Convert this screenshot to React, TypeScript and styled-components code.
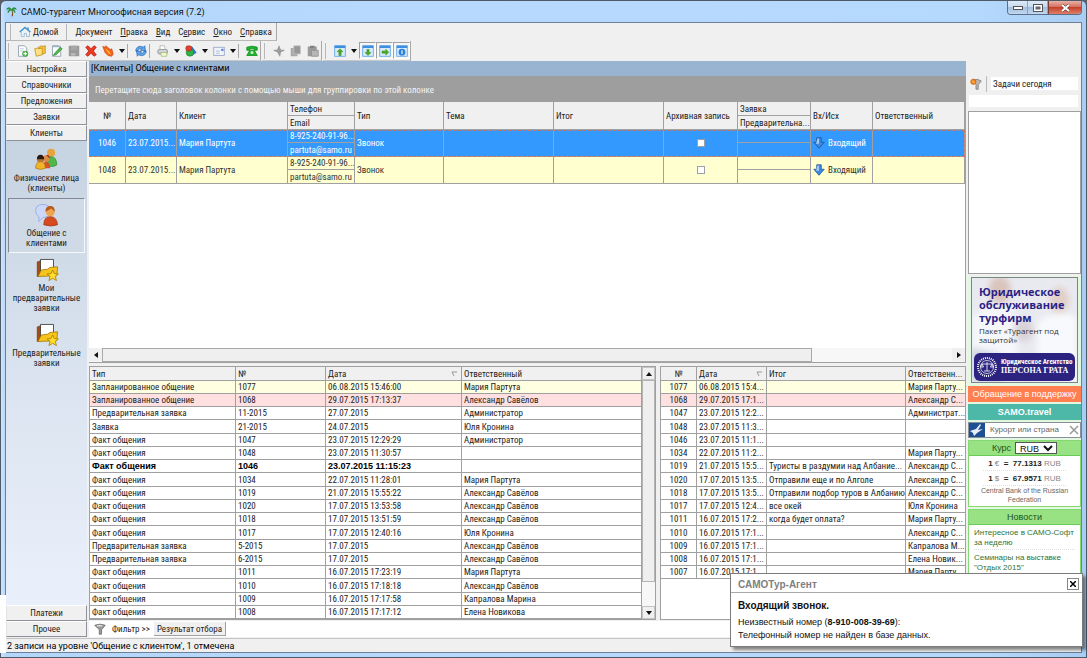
import React from "react";
import styled, { createGlobalStyle, css } from "styled-components";

const UI = `"Roboto Condensed", "DejaVu Sans Condensed", "Liberation Sans", sans-serif`;
const SANS = `"Liberation Sans", Arial, sans-serif`;
const CHROME = `Roboto, "Noto Sans", sans-serif`;
const HUMAN = `"Open Sans", "Noto Sans", sans-serif`;

const Global = createGlobalStyle`
  * { box-sizing: border-box; }
  body { margin: 0; background: #5c6066; font-family: ${UI}; font-size: 9px; line-height: 12px; color: #222; }
  button, input, select { font: inherit; color: inherit; margin: 0; padding: 0; border: 0; background: none; border-radius: 0; }
  a { color: inherit; text-decoration: none; }
  svg { display: block; flex: none; }
`;

/* ---------- window frame ---------- */

const Window = styled.div`
  position: relative;
  height: 100vh;
  min-height: 640px;
  display: flex;
  flex-direction: column;
  border: 1px solid #4f5a68;
  border-radius: 6px 6px 0 0;
  padding: 0 4px 4px;
  background: linear-gradient(90deg, #cfe4fa 0, #b3d6fb 5px, #b7d9fd 40%, #b5d8fd 90%, #a9cdf2 100%);
`;

const FramePatch = styled.div`
  position: absolute;
  left: -1px;
  bottom: 4px;
  width: 6px;
  height: 58px;
  background: #fff;
`;

const TitleBar = styled.header`
  height: 21px;
  flex: none;
  display: flex;
  align-items: center;
  gap: 4px;
  padding-left: 1px;
  font: 9px/20px ${CHROME};
  color: #111;
  h1 { flex: 1; margin: 0; font: inherit; }
`;

const WinButtons = styled.div`
  display: flex;
  align-self: flex-start;
  height: 14px;
  border: 1px solid #5b6f8a;
  border-top: 0;
  border-radius: 0 0 4px 4px;
  overflow: hidden;
`;

const WinButton = styled.button<{ $close?: boolean }>`
  width: ${(p) => (p.$close ? 33 : 20)}px;
  display: grid;
  place-items: center;
  border-left: ${(p) => (p.$close ? "1px solid #7c3a35" : "0")};
  border-right: ${(p) => (p.$close ? "0" : "1px solid #8ea4bf")};
  background: ${(p) =>
    p.$close
      ? "linear-gradient(#e6b3a8, #d8705c 45%, #c4422c 50%, #dd8068)"
      : "linear-gradient(#dde9f7, #c8dbf1 45%, #a5bfdc 50%, #c0d8f0)"};
`;

const Client = styled.div`
  flex: 1;
  min-height: 0;
  display: flex;
  flex-direction: column;
  border: 1px solid #6d8097;
  background: #f0f0f0;
`;

/* ---------- menu and tool bars ---------- */

const MenuBar = styled.nav`
  display: flex;
  align-self: flex-start;
  align-items: center;
  height: 18px;
  padding: 0 4px 0 4px;
  border-right: 1px solid #a8a8a8;
  border-bottom: 1px solid #b8b8b8;
  gap: 8px;
  a { display: flex; align-items: center; gap: 2px; }
  u { text-underline-offset: 1px; }
`;

const Grip = styled.span`
  width: 1px;
  height: 16px;
  background: #b8b8b8;
`;

const ToolRow = styled.div`
  display: flex;
  height: 20px;
  flex: none;
`;

const ToolBar = styled.div`
  display: flex;
  align-items: center;
  padding-left: 2px;
  margin-right: 1px;
  border-right: 1px solid #a8a8a8;
  border-bottom: 1px solid #c8c8c8;
  > ${Grip} { margin-right: 5px; }
`;

const ToolButton = styled.button<{ $on?: boolean }>`
  width: 17px;
  height: 17px;
  display: grid;
  place-items: center;
  ${(p) => p.$on && css`border: 1px solid #a0a0a0; border-right-color: #fff; border-bottom-color: #fff; background: #f6f6f6;`}
`;

const DropButton = styled.button`
  width: 11px;
  height: 17px;
  display: grid;
  place-items: center;
`;

const Sep = styled.span<{ $blank?: boolean }>`
  width: 5px;
  height: 14px;
  border-left: 1px solid ${(p) => (p.$blank ? "transparent" : "#a8a8a8")};
`;

/* ---------- body ---------- */

const Body = styled.div`
  flex: 1;
  min-height: 0;
  display: grid;
  grid-template-columns: 81px minmax(0, 1fr) 113px;
  column-gap: 2px;
  padding: 0 0 1px 0;
`;

const SideNav = styled.aside`
  display: flex;
  flex-direction: column;
  min-height: 0;
`;

const SideButton = styled.button`
  height: 16px;
  flex: none;
  border: 1px solid #8d9299;
  border-top-color: #fff;
  border-left-color: #e4e4e4;
  background: #f0f0f0;
  text-align: center;
`;

const SidePanel = styled.div`
  flex: 1;
  display: flex;
  flex-direction: column;
  padding: 2px 2px 0;
  background: linear-gradient(#c6d3e0, #d8e2ee 45%, #eaf0fb);
`;

const SideItem = styled.a<{ $active?: boolean }>`
  display: flex;
  flex-direction: column;
  align-items: center;
  padding: 3px 0 4px;
  line-height: 10px;
  text-align: center;
  white-space: pre-line;
  border: 1px solid transparent;
  ${(p) => p.$active && css`border-color: #7f8894 #f4f8fc #f4f8fc #7f8894; background: #d0dae6;`}
`;

const Main = styled.main`
  display: flex;
  flex-direction: column;
  min-width: 0;
  min-height: 0;
`;

const Caption = styled.h2`
  margin: 0;
  height: 15px;
  flex: none;
  padding: 0 2px;
  background: #99b4d1;
  font: 9px/15px ${CHROME};
  color: #000;
`;

const GroupHint = styled.div`
  height: 26px;
  flex: none;
  padding: 0 6px;
  background: #9e9e9e;
  color: #f4f4f4;
  line-height: 28px;
`;

const UpperPane = styled.section`
  flex: 1;
  min-height: 0;
  display: flex;
  flex-direction: column;
  justify-content: space-between;
  background: #fff;
  border-right: 1px solid #a0a0a0;
  border-bottom: 1px solid #a0a0a0;
`;

const Grid = styled.table`
  width: 100%;
  table-layout: fixed;
  border-collapse: separate;
  border-spacing: 0;
  th, td {
    padding: 0 2px;
    overflow: hidden;
    white-space: nowrap;
    text-align: left;
    font-weight: inherit;
    border-right: 1px solid #a0a0a0;
    border-bottom: 1px solid #a0a0a0;
  }
  th { background: #f0f0f0; }
`;

const CallGrid = styled(Grid)`
  tr { height: 13px; }
  thead tr, tr:nth-child(2) { height: 14px; }
  th, td { line-height: 12px; }
  th:first-child[rowspan], td[data-center] { text-align: center; }
`;

const CallBody = styled.tbody<{ $selected?: boolean }>`
  background: ${(p) => (p.$selected ? "#3399ff" : "#ffffcf")};
  color: ${(p) => (p.$selected ? "#fff" : "#333")};
  ${(p) => p.$selected && css`outline: 1px dashed #c87860; outline-offset: -1px;`}
  input { display: block; appearance: none; width: 8px; height: 8px; margin: 0 auto; background: #fff; border: 1px solid #9aa0a8; }
  label { display: flex; align-items: center; gap: 3px; }
`;

const HScroll = styled.div`
  display: flex;
  height: 14px;
  flex: none;
  background: #f7f7f7;
  align-items: stretch;
`;

const ScrollButton = styled.button`
  width: 13px;
  height: 13px;
  flex: none;
  display: grid;
  place-items: center;
  background: #f0f0f0;
`;

const HTrack = styled.div`
  flex: 1;
  display: flex;
  &::after { content: ""; flex: 14; }
`;

const HThumb = styled.div`
  flex: 71;
  border: 1px solid #a9a9a9;
  background: #efefef;
`;

const LowerPane = styled.section`
  display: grid;
  grid-template-columns: minmax(0, 1fr) 306px;
  column-gap: 4px;
  height: 254px;
  flex: none;
  margin-top: 3px;
`;

const ListBox = styled.div`
  display: flex;
  min-width: 0;
  overflow: hidden;
  background: #fff;
  border-top: 1px solid #a0a0a0;
  border-left: 1px solid #a0a0a0;
  border-bottom: 1px solid #a0a0a0;
`;

const ListScroll = styled.div`
  flex: 1;
  min-width: 0;
  overflow: hidden;
`;

const VScroll = styled.div`
  width: 14px;
  flex: none;
  display: flex;
  flex-direction: column;
  background: #f7f7f7;
  border-right: 1px solid #a0a0a0;
  ${ScrollButton} { border: 1px solid #c4c4c4; }
`;

const VThumb = styled.div`
  flex: 1;
  margin-bottom: 24px;
  border: 1px solid #b4b4b4;
  background: #efefef;
`;

const ListGrid = styled(Grid)<{ $centerFirst?: boolean }>`
  thead tr { height: 14px; }
  tbody tr { height: 13px; }
  tbody tr:nth-child(4n) { height: 14px; }
  th, td { line-height: 12px; }
  ${(p) => p.$centerFirst && css`th:first-child, td:first-child { text-align: center; }`}
`;

const ListRow = styled.tr<{ $tone?: string }>`
  background: ${(p) => (p.$tone === "plan" ? "#ffffe1" : p.$tone === "late" ? "#ffe0e0" : "#fff")};
  ${(p) => p.$tone === "now" && css`font: bold 9px ${SANS}; color: #000;`}
`;

const SortHead = styled.span`
  display: flex;
  justify-content: space-between;
  align-items: center;
  padding-right: 1px;
`;

const FilterBar = styled.div`
  display: flex;
  align-items: center;
  height: 16px;
  flex: none;
  margin-top: 1px;
  padding-left: 5px;
  background: #fff;
  button { display: flex; align-items: center; gap: 6px; height: 14px; }
`;

const ResultTab = styled.button`
  margin-left: 4px;
  padding: 0 3px;
  background: #f0f0f0;
  border-right: 1px solid #a0a0a0;
  border-bottom: 1px solid #a0a0a0;
`;

const StatusBar = styled.footer`
  height: 14px;
  flex: none;
  padding-left: 1px;
  border-top: 1px solid #c4c4c4;
  font: 9px/14px ${CHROME};
  color: #000;
`;

/* ---------- right column ---------- */

const RightCol = styled.aside`
  display: flex;
  flex-direction: column;
  min-height: 0;
  padding-top: 16px;
`;

const TaskRow = styled.div`
  display: flex;
  align-items: center;
  height: 13px;
  flex: none;
  gap: 4px;
  padding: 0 3px 0 2px;
  input { flex: 1; min-width: 0; height: 13px; background: #fff; padding-left: 2px; }
`;

const TaskLine = styled.input`
  && { height: 12px; margin: 5px 3px 4px 1px; background: #fff; flex: none; }
`;

const TaskList = styled.div`
  height: 163px;
  flex: none;
  border: 1px solid #a0a0a0;
  background: #fff;
`;

const Widgets = styled.div`
  flex: 1;
  min-height: 0;
  overflow: hidden;
  display: flex;
  flex-direction: column;
  margin-top: 2px;
  gap: 2px;
  background: #e2f8e0;
  font-family: ${SANS};
`;

const Banner = styled.a`
  position: relative;
  display: flex;
  flex-direction: column;
  height: 106px;
  flex: none;
  margin: 1px 3px 1px;
  border: 1px solid #80838c;
  overflow: hidden;
  background: #e9eaf0;
  strong { position: relative; padding: 7px 0 0 7px; font: bold 11px/13px ${HUMAN}; color: #2b1f86; white-space: pre-line; }
  span { position: relative; padding: 2px 0 0 7px; font: 8px/9px ${HUMAN}; color: #333; white-space: pre-line; }
`;

const BannerArt = styled.svg`
  position: absolute;
  inset: 0;
  width: 100%;
  height: 100%;
`;

const Agency = styled.div`
  position: relative;
  display: flex;
  align-items: center;
  gap: 3px;
  height: 28px;
  margin: auto 2px 1px;
  padding-left: 2px;
  border-radius: 6px;
  background: #2c2380;
  color: #fff;
  font: bold 8px/10px "Liberation Serif", serif;
  white-space: nowrap;
  small { display: block; font: bold 7px/8px ${UI}; }
`;

const LinkBar = styled.a<{ $color: string }>`
  height: 16px;
  flex: none;
  background: ${(p) => p.$color};
  color: #fff;
  font-size: 9px;
  line-height: 16px;
  text-align: center;
  white-space: nowrap;
`;

const Search = styled.label`
  display: flex;
  align-items: center;
  height: 16px;
  flex: none;
  border: 1px solid #8a9099;
  background: #fff;
  color: #777;
  input { flex: 1; min-width: 0; padding-left: 5px; font-size: 8px; }
  input::placeholder { color: #666; opacity: 1; }
`;

const Card = styled.section<{ $fill?: boolean }>`
  flex: ${(p) => (p.$fill ? "1 0 auto" : "none")};
  border: 1px solid #86d873;
  background: #fff;
  h3 {
    display: flex;
    justify-content: center;
    align-items: center;
    gap: 4px;
    margin: 0;
    height: 15px;
    background: #98e283;
    border-bottom: 1px solid #68cc56;
    font: 9px/14px ${SANS};
    color: #225522;
  }
  select { width: 42px; height: 12px; font: 9px/10px ${SANS}; color: #111; border: 1px solid #555; background: #fff; }
`;

const Rate = styled.p`
  margin: 0 14px;
  height: 15px;
  border-bottom: 1px dotted #ddd;
  font-size: 8px;
  line-height: 16px;
  text-align: center;
  white-space: pre;
  color: #888;
  b { color: #222; }
`;

const Source = styled.p`
  margin: 0 0 2px;
  font-size: 7px;
  line-height: 9px;
  text-align: center;
  color: #666;
`;

const NewsItem = styled.a`
  display: block;
  margin: 0 5px;
  padding: 3px 0 1px;
  border-bottom: 1px dotted #ddd;
  font-size: 8px;
  line-height: 10px;
  color: #2f7434;
  white-space: pre;
`;

/* ---------- incoming call popup ---------- */

const Popup = styled.div`
  position: absolute;
  right: 3px;
  bottom: 10px;
  width: 353px;
  height: 74px;
  background: #fff;
  border: 1px solid #7c7c7c;
  box-shadow: 3px 3px 3px rgba(0, 0, 0, 0.45);
  font: 9px/13px ${SANS};
  color: #111;
  header {
    display: flex;
    align-items: center;
    justify-content: space-between;
    height: 19px;
    padding: 2px 3px 0 7px;
    border-bottom: 1px solid #aaa;
    font-size: 10px;
    font-weight: bold;
    color: #808080;
  }
  header button { width: 12px; height: 12px; border: 1px solid #888; display: grid; place-items: center; }
  p { margin: 0; padding-left: 7px; }
  p:first-of-type { padding: 6px 0 4px 7px; font-size: 10px; font-weight: bold; }
`;

/* ---------- icons ---------- */

const Svg = ({ size = 12, children }: { size?: number; children: React.ReactNode }) => (
  <svg width={size} height={size} viewBox="0 0 16 16" aria-hidden="true">{children}</svg>
);

const page = <path d="M2 1h8l3 3v11H2z" fill="#fff" stroke="#7d8fa3" />;

const Icon = {
  palm: (
    <Svg size={11}>
      <path d="M8 6c1 3 1 6 0 9h2c.6-3 .4-6-.6-9z" fill="#7a5522" />
      <path d="M8 5C5 1 2 2 1 5c2-1 4-1 5 0-2 0-4 2-3 5 1-2 3-4 5-4 3 0 4 2 5 4 1-3-1-5-3-5 2-1 3-1 5 0-1-3-4-4-7 0z" fill="#279a3b" stroke="#14702a" strokeWidth=".5" />
    </Svg>
  ),
  home: (
    <Svg>
      <path d="M3 8v6h4v-4h3v4h4V8" fill="#e8f3fb" stroke="#8fb0ca" />
      <path d="M1 8l7-6 7 6" fill="none" stroke="#3d95cf" strokeWidth="2" />
      <rect x="11" y="2" width="2" height="3" fill="#3d95cf" />
    </Svg>
  ),
  add: <Svg>{page}<path d="M4 5h5M4 8h5" stroke="#a8b8c8" /><circle cx="11" cy="11.500" r="4" fill="#3fae38" /><path d="M11 9v5M8.500 11.500h5" stroke="#fff" strokeWidth="1.500" /></Svg>,
  folder: <Svg><path d="M6 3l4-2 1 1 4-1v10l-7 2z" fill="#f5c542" stroke="#bb8514" /><path d="M1 5l4-1 1 1 5-1v9l-8 2z" fill="#ffe27c" stroke="#bb8514" /></Svg>,
  edit: <Svg>{page}<path d="M2 1h11v2H2z" fill="#9fb4c8" /><path d="M4 12l8-9 3 2-8 8-4 1z" fill="#4fb848" stroke="#22752b" strokeWidth=".7" /></Svg>,
  save: <Svg><rect x="1" y="1" width="14" height="14" fill="#9a9a9a" /><path d="M4 1h8v6H4z" fill="#a6a6a6" /><path d="M4 11h6v3H4z" fill="#bdbdbd" /></Svg>,
  del: <Svg><path d="M1 3l3-2 4 4 4-4 3 2-4 5 4 5-3 2-4-4-4 4-3-2 4-5z" fill="#ee3a22" stroke="#a81c10" /></Svg>,
  flame: <Svg><path d="M1 2l4 1V1l6 5 2-1 2 7-2 3-5-1-4-4-1-3z" fill="#f5641a" stroke="#c83a10" strokeWidth=".8" /><path d="M4 4l6 5 2 4-4-2z" fill="#ffb52e" /></Svg>,
  refresh: <Svg><path d="M1 8C1 3 6 0 11 3l2-2 1 7-7-1 2-2C6 4 4 6 4 8zM15 8c0 5-5 8-10 5l-2 2-1-7 7 1-2 2c3 1 5-1 5-3z" fill="#5ba6ee" stroke="#1859a8" strokeWidth=".8" /></Svg>,
  print: <Svg><path d="M4 1h6l1 5H4z" fill="#fff" stroke="#aaa" /><rect x="1" y="6" width="13" height="6" rx="2" fill="#c3c7cb" stroke="#8d9399" /><path d="M3 8h9" stroke="#eee" /><path d="M5 10h8v5H6z" fill="#f1f8d8" stroke="#9ebb6a" /></Svg>,
  palette: <Svg><path d="M9 2l6 8-6 4z" fill="#2d7be0" stroke="#174a98" strokeWidth=".6" /><circle cx="6.500" cy="10" r="5" fill="#2fb344" stroke="#12652a" strokeWidth=".6" /><rect x="1" y="1" width="8" height="7" rx="3" fill="#e1402f" stroke="#96170c" strokeWidth=".6" /></Svg>,
  mail: <Svg><rect x="1" y="3" width="14" height="11" fill="#eef3fc" stroke="#8a9cc0" /><path d="M4 8h5M4 11h5" stroke="#a2b2d0" /><rect x="11" y="5" width="3" height="3" fill="#5f80d8" /></Svg>,
  phone: <Svg><path d="M1 3q7-3 14 0v4h-4V5H5v2H1z" fill="#1fb52c" stroke="#0b8a18" /><path d="M5 7h6l4 7H1z" fill="#1fb52c" stroke="#0b8a18" /><circle cx="8" cy="10" r="2" fill="#bff2c0" /></Svg>,
  cut: <Svg><path d="M1 7h5l2-5 2 5h5l-5 2-1 5-3-5z" fill="#9b9b9b" stroke="#9b9b9b" strokeWidth="1.500" /></Svg>,
  copy: <Svg><path d="M1 4h9v11H1z" fill="#a8a8a8" /><path d="M5 1h9v11H5z" fill="#989898" stroke="#c8c8c8" /></Svg>,
  paste: <Svg><rect x="1" y="2" width="12" height="13" fill="#9a9a9a" /><rect x="4" y="1" width="6" height="3" fill="#808080" /><path d="M6 7h9v8H6z" fill="#b6b6b6" stroke="#8c8c8c" /></Svg>,
  group: (
    <Svg size={26}>
      <circle cx="10.500" cy="3.500" r="2.500" fill="#e9a33c" />
      <path d="M7 11q0-5 3.500-5t3.500 5q-3 2-7 0z" fill="#4fb948" stroke="#2b8230" strokeWidth=".4" />
      <circle cx="7.500" cy="7" r="2" fill="#dc8a48" /><path d="M7.500 5q2-.5 2.300 2z" fill="#8f2b12" />
      <path d="M5 13q0-4 2.500-4t2.500 4z" fill="#d5532a" />
      <circle cx="4" cy="7.500" r="2.200" fill="#b97a3b" /><path d="M1.800 7.500q0-2.800 2.200-2.800t2.200 2.800z" fill="#2b1a10" />
      <path d="M1 13q0-4 3-4t3 4q-3 1.600-6 0z" fill="#f0b428" stroke="#a8720c" strokeWidth=".4" />
    </Svg>
  ),
  talk: (
    <Svg size={26}>
      <path d="M1 5.500Q1 1.500 5.500 1.500t4.500 4-4.500 4L3 12V9Q1 8 1 5.500z" fill="#ccd8fa" stroke="#94a6df" strokeWidth=".5" />
      <circle cx="10" cy="6" r="2.800" fill="#eda451" /><path d="M7 6q0-3.500 3-3.500t2.700 3.500l-2-2z" fill="#b65a1d" />
      <path d="M6 14q0-5 4-5t4.500 5q-4 1.600-8.500 0z" fill="#d7491e" stroke="#9c2b0e" strokeWidth=".4" />
    </Svg>
  ),
  starFolder: (
    <Svg size={26}>
      <path d="M2 3l3-1v9l-3 1z" fill="#a84b12" stroke="#73300a" strokeWidth=".4" />
      <path d="M4 1.500h8v8H4z" fill="#fff" stroke="#333" strokeWidth=".5" />
      <path d="M2.500 12l2-4 4-.5 1-1 5-.5-.5 5.500z" fill="#f6c51d" stroke="#a87800" strokeWidth=".5" />
      <path d="M11.500 8l1 2.200 2.500.2-1.900 1.500.7 2.600-2.300-1.400-2.300 1.400.7-2.600L8 10.400l2.500-.2z" fill="#ffde2e" stroke="#a97c00" strokeWidth=".5" />
    </Svg>
  ),
  inbound: <Svg><path d="M5 1h6v6h4l-7 8-7-8h4z" fill="#3d8ae0" stroke="#1c4f97" /><path d="M6 2h2v7H4z" fill="#9fcaf7" /></Svg>,
  funnel: <Svg><path d="M1 3q7-3 14 0L10 9v6H7V9z" fill="#9a9a9a" stroke="#666" /><path d="M4 4q4-1 7 0" stroke="#eee" strokeWidth="1.500" fill="none" /></Svg>,
  taskFunnel: <Svg><path d="M4 3q6-3 11 1l-4 5v6H8V9z" fill="#b9b9b9" stroke="#777" /><circle cx="4.500" cy="5" r="3.500" fill="#f58a20" stroke="#c95c0a" /><path d="M3 4l3 3" stroke="#ffe08a" /></Svg>,
};

const Layout = ({ kind }: { kind: "up" | "down" | "right" | "info" }) => (
  <Svg>
    <rect x="1" y="1" width="14" height="14" fill="#d9ecfd" stroke="#4a98e4" />
    <path d="M1 2.500h14" stroke="#3f8fe0" strokeWidth="3" />
    {kind === "up" && <path d="M8 5l4 4H9.500v5h-3V9H4z" fill="#4cae22" stroke="#2f8212" strokeWidth=".6" />}
    {kind === "down" && <path d="M8 14l4-4H9.500V6h-3v4H4z" fill="#4cae22" stroke="#2f8212" strokeWidth=".6" />}
    {kind === "right" && <path d="M13 9.500L9 5.500V8H4v3h5v2.500z" fill="#4cae22" stroke="#2f8212" strokeWidth=".6" />}
    {kind === "info" && <><circle cx="8" cy="9.500" r="4.500" fill="#2b7fdc" /><path d="M8 7v5" stroke="#fff" strokeWidth="1.500" /></>}
  </Svg>
);

const Tri = ({ dir = "down" }: { dir?: "down" | "up" | "left" | "right" }) => {
  const d = { down: "M0 1h6L3 5z", up: "M0 5h6L3 1z", left: "M5 0v6L1 3z", right: "M1 0v6l4-3z" }[dir];
  return <svg width="6" height="6" viewBox="0 0 6 6" aria-hidden="true"><path d={d} fill="#111" /></svg>;
};

const SortMark = () => (
  <svg width="7" height="6" viewBox="0 0 7 6" aria-hidden="true"><path d="M6 1H1l2 4" fill="none" stroke="#999" /></svg>
);

/* ---------- data ---------- */

const history: [string, string, string, string, string?][] = [
  ["Запланированное общение", "1077", "06.08.2015 15:46:00", "Мария Партута", "plan"],
  ["Запланированное общение", "1068", "29.07.2015 17:13:37", "Александр Савёлов", "late"],
  ["Предварительная заявка", "11-2015", "27.07.2015", "Администратор"],
  ["Заявка", "21-2015", "24.07.2015", "Юля Кронина"],
  ["Факт общения", "1047", "23.07.2015 12:29:29", "Администратор"],
  ["Факт общения", "1048", "23.07.2015 11:30:57", ""],
  ["Факт общения", "1046", "23.07.2015 11:15:23", "", "now"],
  ["Факт общения", "1034", "22.07.2015 11:28:01", "Мария Партута"],
  ["Факт общения", "1019", "21.07.2015 15:55:22", "Александр Савёлов"],
  ["Факт общения", "1020", "17.07.2015 13:53:58", "Александр Савёлов"],
  ["Факт общения", "1018", "17.07.2015 13:51:59", "Александр Савёлов"],
  ["Факт общения", "1017", "17.07.2015 12:40:16", "Юля Кронина"],
  ["Предварительная заявка", "5-2015", "17.07.2015", "Александр Савёлов"],
  ["Предварительная заявка", "6-2015", "17.07.2015", "Александр Савёлов"],
  ["Факт общения", "1011", "16.07.2015 17:23:19", "Мария Партута"],
  ["Факт общения", "1010", "16.07.2015 17:18:18", "Александр Савёлов"],
  ["Факт общения", "1009", "16.07.2015 17:17:58", "Капралова Марина"],
  ["Факт общения", "1008", "16.07.2015 17:17:12", "Елена Новикова"],
];

const results: [string, string, string, string, string?][] = [
  ["1077", "06.08.2015 15:4...", "", "Мария Парту...", "plan"],
  ["1068", "29.07.2015 17:1...", "", "Александр С...", "late"],
  ["1047", "23.07.2015 12:2...", "", "Администрат..."],
  ["1048", "23.07.2015 11:3...", "", ""],
  ["1046", "23.07.2015 11:1...", "", ""],
  ["1034", "22.07.2015 11:2...", "", "Мария Парту..."],
  ["1019", "21.07.2015 15:5...", "Туристы в раздумии над Албание...", "Александр С..."],
  ["1020", "17.07.2015 13:5...", "Отправили еще и по Алголе", "Александр С..."],
  ["1018", "17.07.2015 13:5...", "Отправили подбор туров в Албанию", "Александр С..."],
  ["1017", "17.07.2015 12:4...", "все окей", "Юля Кронина"],
  ["1011", "16.07.2015 17:2...", "когда будет оплата?", "Мария Парту..."],
  ["1010", "16.07.2015 17:1...", "", "Александр С..."],
  ["1009", "16.07.2015 17:1...", "", "Капралова М..."],
  ["1008", "16.07.2015 17:1...", "", "Елена Новик..."],
  ["1007", "16.07.2015 17:1...", "", "Мария Парту..."],
];

const Cols = ({ widths }: { widths: (number | undefined)[] }) => (
  <colgroup>{widths.map((w, i) => <col key={i} width={w} />)}</colgroup>
);

const tool = (label: string, icon: React.ReactNode, on?: boolean) => (
  <ToolButton aria-label={label} $on={on}>{icon}</ToolButton>
);
const drop = (label: string) => <DropButton aria-label={label}><Tri /></DropButton>;

const Call = ({ id, selected }: { id: string; selected?: boolean }) => (
  <CallBody $selected={selected}>
    <tr>
      <td rowSpan={2} data-center>{id}</td>
      <td rowSpan={2}>23.07.2015...</td>
      <td rowSpan={2}>Мария Партута</td>
      <td>8-925-240-91-96...</td>
      <td rowSpan={2}>Звонок</td>
      <td rowSpan={2} />
      <td rowSpan={2} />
      <td rowSpan={2}><input type="checkbox" aria-label={`Архивная запись ${id}`} /></td>
      <td />
      <td rowSpan={2}><label>{Icon.inbound}Входящий</label></td>
      <td rowSpan={2} />
    </tr>
    <tr>
      <td>partuta@samo.ru</td>
      <td />
    </tr>
  </CallBody>
);

export default function App() {
  return (
    <>
      <Global />
      <Window>
        <TitleBar>
          {Icon.palm}
          <h1>САМО-турагент Многоофисная версия (7.2)</h1>
          <WinButtons>
            <WinButton aria-label="Свернуть"><svg width="10" height="6"><rect x=".5" y="1.500" width="9" height="3" fill="#fff" stroke="#555" /></svg></WinButton>
            <WinButton aria-label="Развернуть"><svg width="10" height="8"><rect x="1.500" y="1.500" width="7" height="5" fill="#667" stroke="#fff" strokeWidth="2" /><rect x=".5" y=".5" width="9" height="7" fill="none" stroke="#555" /></svg></WinButton>
            <WinButton $close aria-label="Закрыть"><svg width="9" height="8"><path d="M1 1l7 6M8 1L1 7" stroke="#633" strokeWidth="3" /><path d="M1 1l7 6M8 1L1 7" stroke="#fff" strokeWidth="2" /></svg></WinButton>
          </WinButtons>
        </TitleBar>

        <Client>
          <MenuBar>
            <Grip />
            <a href="#home">{Icon.home}Домой</a>
            <Grip />
            <a href="#doc"><span><u>Д</u>окумент</span></a>
            <a href="#edit"><span><u>П</u>равка</span></a>
            <a href="#view"><span><u>В</u>ид</span></a>
            <a href="#service"><span>С<u>е</u>рвис</span></a>
            <a href="#window"><span><u>О</u>кно</span></a>
            <a href="#help"><span><u>С</u>правка</span></a>
          </MenuBar>
          <ToolRow>
            <ToolBar>
              <Grip />
              {tool("Создать", Icon.add)}
              {tool("Открыть", Icon.folder)}
              {tool("Изменить", Icon.edit)}
              {tool("Сохранить", Icon.save)}
              {tool("Удалить", Icon.del)}
              {tool("Горящие", Icon.flame)}
              {drop("Горящие: меню")}
              <Sep />
              {tool("Обновить", Icon.refresh)}
              <Sep />
              {tool("Печать", Icon.print)}
              {drop("Печать: меню")}
              {tool("Цвета", Icon.palette)}
              {drop("Цвета: меню")}
              {tool("Письмо", Icon.mail)}
              {drop("Письмо: меню")}
              <Sep />
              {tool("Звонок", Icon.phone)}
            </ToolBar>
            <ToolBar>
              <Grip />
              {tool("Вырезать", Icon.cut)}
              {tool("Копировать", Icon.copy)}
              {tool("Вставить", Icon.paste)}
            </ToolBar>
            <ToolBar>
              <Grip />
              {tool("Панель сверху", <Layout kind="up" />)}
              {drop("Панель: меню")}
              {tool("Панель снизу", <Layout kind="down" />, true)}
              {tool("Панель справа", <Layout kind="right" />, true)}
              {tool("Сведения", <Layout kind="info" />, true)}
            </ToolBar>
          </ToolRow>

          <Body>
            <SideNav>
              {["Настройка", "Справочники", "Предложения", "Заявки", "Клиенты"].map((t) => <SideButton key={t}>{t}</SideButton>)}
              <SidePanel>
                <SideItem href="#people">{Icon.group}{"Физические лица\n(клиенты)"}</SideItem>
                <SideItem href="#talk" $active>{Icon.talk}{"Общение с\nклиентами"}</SideItem>
                <SideItem href="#mine">{Icon.starFolder}{"Мои\nпредварительные\nзаявки"}</SideItem>
                <SideItem href="#pre">{Icon.starFolder}{"Предварительные\nзаявки"}</SideItem>
              </SidePanel>
              <SideButton>Платежи</SideButton>
              <SideButton>Прочее</SideButton>
            </SideNav>

            <Main>
              <Caption>[Клиенты] Общение с клиентами</Caption>
              <GroupHint>Перетащите сюда заголовок колонки с помощью мыши для группировки по этой колонке</GroupHint>
              <UpperPane>
                <CallGrid>
                  <Cols widths={[37, 51, 111, 67, 89, 110, 110, 74, 73, 62, undefined]} />
                  <thead>
                    <tr>
                      <th rowSpan={2}>№</th>
                      <th rowSpan={2}>Дата</th>
                      <th rowSpan={2}>Клиент</th>
                      <th>Телефон</th>
                      <th rowSpan={2}>Тип</th>
                      <th rowSpan={2}>Тема</th>
                      <th rowSpan={2}>Итог</th>
                      <th rowSpan={2}>Архивная запись</th>
                      <th>Заявка</th>
                      <th rowSpan={2}>Вх/Исх</th>
                      <th rowSpan={2}>Ответственный</th>
                    </tr>
                    <tr>
                      <th>Email</th>
                      <th>Предварительна...</th>
                    </tr>
                  </thead>
                  <Call id="1046" selected />
                  <Call id="1048" />
                </CallGrid>
                <HScroll>
                  <ScrollButton aria-label="Влево"><Tri dir="left" /></ScrollButton>
                  <HTrack><HThumb /></HTrack>
                  <ScrollButton aria-label="Вправо"><Tri dir="right" /></ScrollButton>
                </HScroll>
              </UpperPane>

              <LowerPane>
                <ListBox>
                  <ListScroll>
                    <ListGrid>
                      <Cols widths={[146, 90, 136, undefined]} />
                      <thead>
                        <tr>
                          <th>Тип</th>
                          <th>№</th>
                          <th><SortHead>Дата<SortMark /></SortHead></th>
                          <th>Ответственный</th>
                        </tr>
                      </thead>
                      <tbody>
                        {history.map(([type, no, date, who, tone]) => (
                          <ListRow key={no} $tone={tone}>
                            <td>{type}</td><td>{no}</td><td>{date}</td><td>{who}</td>
                          </ListRow>
                        ))}
                      </tbody>
                    </ListGrid>
                  </ListScroll>
                  <VScroll>
                    <ScrollButton aria-label="Вверх"><Tri dir="up" /></ScrollButton>
                    <VThumb />
                    <ScrollButton aria-label="Вниз"><Tri /></ScrollButton>
                  </VScroll>
                </ListBox>
                <ListBox>
                  <ListScroll>
                    <ListGrid $centerFirst>
                      <Cols widths={[36, 70, 139, undefined]} />
                      <thead>
                        <tr>
                          <th>№</th>
                          <th><SortHead>Дата<SortMark /></SortHead></th>
                          <th>Итог</th>
                          <th>Ответственн...</th>
                        </tr>
                      </thead>
                      <tbody>
                        {results.map(([no, date, note, who, tone]) => (
                          <ListRow key={no} $tone={tone}>
                            <td>{no}</td><td>{date}</td><td>{note}</td><td>{who}</td>
                          </ListRow>
                        ))}
                      </tbody>
                    </ListGrid>
                  </ListScroll>
                </ListBox>
              </LowerPane>

              <FilterBar>
                <button>{Icon.funnel}Фильтр &gt;&gt;</button>
                <ResultTab>Результат отбора</ResultTab>
              </FilterBar>
            </Main>

            <RightCol>
              <TaskRow>
                {Icon.taskFunnel}
                <Grip />
                <input aria-label="Задачи" defaultValue="Задачи сегодня" />
              </TaskRow>
              <TaskLine aria-label="Поиск задачи" />
              <TaskList />
              <Widgets>
                <Banner href="#persona">
                  <BannerArt viewBox="0 0 106 104" preserveAspectRatio="none" aria-hidden="true">
                    <defs><filter id="soft"><feGaussianBlur stdDeviation="3" /></filter></defs>
                    <g filter="url(#soft)">
                      <ellipse cx="28" cy="12" rx="11" ry="14" fill="#d9c4bc" />
                      <path d="M0 104V40q14-16 40-10l10 74z" fill="#f6f7fb" />
                      <ellipse cx="88" cy="22" rx="10" ry="13" fill="#e2cfc8" />
                      <path d="M66 104V44q20-14 40-4v64z" fill="#f8f9fc" />
                      <ellipse cx="52" cy="52" rx="10" ry="12" fill="#d9d3d8" />
                      <path d="M0 70l30 6v28H0z" fill="#ccd3e0" />
                    </g>
                  </BannerArt>
                  <strong>{"Юридическое\nобслуживание\nтурфирм"}</strong>
                  <span>{"Пакет «Турагент под\nзащитой»"}</span>
                  <Agency>
                    <svg width="22" height="22" viewBox="0 0 22 22" aria-hidden="true">
                      <circle cx="11" cy="11" r="9" fill="none" stroke="#fff" strokeWidth="2" strokeDasharray="1 1" />
                      <circle cx="11" cy="11" r="6.500" fill="none" stroke="#fff" strokeWidth=".7" />
                      <path d="M11 6v9M8 15h6M6 8h10M6 8l-1.500 3h3zM16 8l-1.500 3h3z" stroke="#fff" strokeWidth=".8" fill="none" />
                    </svg>
                    <div><small>Юридическое Агентство</small>ПЕРСОНА ГРАТА</div>
                  </Agency>
                </Banner>
                <LinkBar href="#support" $color="#ff7f50">Обращение в поддержку</LinkBar>
                <LinkBar href="#travel" $color="#4db8a8"><b>SAMO.travel</b></LinkBar>
                <Search>
                  <svg width="16" height="14" viewBox="0 0 16 14" aria-hidden="true">
                    <rect width="16" height="14" fill="#1e4f92" />
                    <path d="M1 8l6-2 4-5 1 1-3 5 5-1-6 4-3 3-1-3z" fill="#e6effa" />
                  </svg>
                  <input placeholder="Курорт или страна" aria-label="Курорт или страна" />
                  <svg width="12" height="12" viewBox="0 0 12 12" aria-hidden="true"><path d="M2 2l8 8M10 2l-8 8" stroke="#999" strokeWidth="1.500" /></svg>
                </Search>
                <Card>
                  <h3><label htmlFor="currency">Курс</label><select id="currency"><option>RUB</option></select></h3>
                  <Rate><b>1</b> €  <b>=</b>  <b>77.1313</b> RUB</Rate>
                  <Rate><b>1</b> $  <b>=</b>  <b>67.9571</b> RUB</Rate>
                  <Source>Central Bank of the Russian<br />Federation</Source>
                </Card>
                <Card $fill>
                  <h3>Новости</h3>
                  <NewsItem href="#news1">{"Интересное в САМО-Софт\nза неделю"}</NewsItem>
                  <NewsItem href="#news2">{"Семинары на выставке\n\"Отдых 2015\""}</NewsItem>
                </Card>
              </Widgets>
            </RightCol>
          </Body>
          <StatusBar>2 записи на уровне 'Общение с клиентом', 1 отмечена</StatusBar>
        </Client>
        <FramePatch />
        <Popup role="dialog" aria-label="Входящий звонок">
          <header>САМОТур-Агент<button aria-label="Закрыть уведомление"><svg width="6" height="6" viewBox="0 0 6 6"><path d="M0 0l6 6M6 0L0 6" stroke="#000" strokeWidth="1.500" /></svg></button></header>
          <p>Входящий звонок.</p>
          <p>Неизвестный номер (<b>8-910-008-39-69</b>):</p>
          <p>Телефонный номер не найден в базе данных.</p>
        </Popup>
      </Window>
    </>
  );
}
